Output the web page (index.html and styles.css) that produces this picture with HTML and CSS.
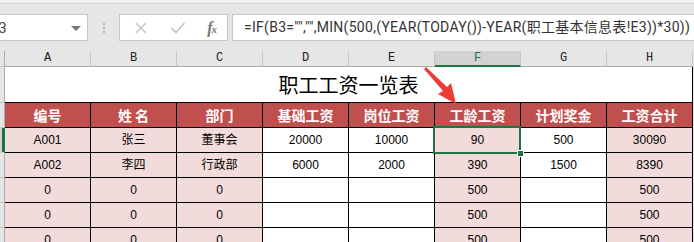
FILE: index.html
```html
<!DOCTYPE html>
<html lang="zh-CN">
<head>
  <meta charset="UTF-8">
  <title>职工工资一览表</title>
  <link rel="stylesheet" href="styles.css">
</head>
<body>

  <div class="top"></div>

  <div class="fbar">
    <div class="namebox"><span>F3</span><i class="caret"></i></div>
    <div class="grip"><b></b><b></b><b></b></div>
    <div class="btns">
      <svg width="14" height="14" viewBox="0 0 14 14"><path d="M2 2 L12 12 M12 2 L2 12" stroke="#c8c8c8" stroke-width="1.6" fill="none"/></svg>
      <svg width="16" height="14" viewBox="0 0 16 14"><path d="M1.5 7 L6 11.5 L14.5 2" stroke="#c8c8c8" stroke-width="1.8" fill="none"/></svg>
      <span class="fx">f<sub>x</sub></span>
    </div>
    <div class="formula">=IF(B3="","",MIN(500,(YEAR(TODAY())-YEAR(职工基本信息表!E3))*30))</div>
  </div>

  <div class="sheet">
    <div class="rh colh"></div>
    <div class="colh">A</div>
    <div class="colh">B</div>
    <div class="colh">C</div>
    <div class="colh">D</div>
    <div class="colh">E</div>
    <div class="colh on">F</div>
    <div class="colh">G</div>
    <div class="colh">H</div>

    <div class="rh title-rh"></div>
    <div class="title">职工工资一览表</div>

    <div class="rh"></div>
    <div class="hd">编号</div>
    <div class="hd">姓 名</div>
    <div class="hd">部门</div>
    <div class="hd">基础工资</div>
    <div class="hd">岗位工资</div>
    <div class="hd">工龄工资</div>
    <div class="hd">计划奖金</div>
    <div class="hd">工资合计</div>

    <div class="rh on"></div>
    <div class="c pk">A001</div>
    <div class="c pk">张三</div>
    <div class="c pk">董事会</div>
    <div class="c">20000</div>
    <div class="c">10000</div>
    <div class="c pk sel">90</div>
    <div class="c">500</div>
    <div class="c pk">30090</div>

    <div class="rh"></div>
    <div class="c pk">A002</div>
    <div class="c pk">李四</div>
    <div class="c pk">行政部</div>
    <div class="c">6000</div>
    <div class="c">2000</div>
    <div class="c pk">390</div>
    <div class="c">1500</div>
    <div class="c pk">8390</div>

    <div class="rh"></div>
    <div class="c pk">0</div>
    <div class="c pk">0</div>
    <div class="c pk">0</div>
    <div class="c"></div>
    <div class="c"></div>
    <div class="c pk">500</div>
    <div class="c"></div>
    <div class="c pk">500</div>

    <div class="rh"></div>
    <div class="c pk">0</div>
    <div class="c pk">0</div>
    <div class="c pk">0</div>
    <div class="c"></div>
    <div class="c"></div>
    <div class="c pk">500</div>
    <div class="c"></div>
    <div class="c pk">500</div>

    <div class="rh"></div>
    <div class="c pk">0</div>
    <div class="c pk">0</div>
    <div class="c pk">0</div>
    <div class="c"></div>
    <div class="c"></div>
    <div class="c pk">500</div>
    <div class="c"></div>
    <div class="c pk">500</div>

    <svg class="arrow" width="50" height="50" viewBox="0 0 50 50">
      <polygon points="9,7 11,5 32,25 36,21 41,42 23,32 28,29" fill="#ee3b36"/>
    </svg>
  </div>

</body>
</html>
```

FILE: styles.css
```css
body { margin: 0; background: #e6e6e6; font-family: "Liberation Sans", "Noto Sans CJK SC", sans-serif; overflow: hidden; }

.top { height: 3px; background: #f1f1f1; border-bottom: 1px solid #d4d4d4; }

.fbar { display: flex; height: 27px; margin: 10px 0; }
.namebox { margin-left: -20px; width: 108px; box-sizing: border-box; background: #fff; border: 1px solid #c6c6c6; display: flex; align-items: center; justify-content: space-between; padding: 0 6px 0 9px; font-family: Roboto, sans-serif; font-size: 15px; color: #444; }
.caret { width: 0; height: 0; border-left: 5px solid transparent; border-right: 5px solid transparent; border-top: 5px solid #777; margin-top: 1px; }
.grip { width: 31px; display: flex; flex-direction: column; align-items: center; justify-content: center; gap: 2px; }
.grip b { width: 2px; height: 2px; background: #b3b3b3; }
.btns { width: 109px; box-sizing: border-box; background: #fff; border: 1px solid #c6c6c6; display: flex; align-items: center; justify-content: space-between; padding: 0 10px 0 14px; }
.fx { font-family: "Liberation Serif", serif; font-style: italic; font-size: 16px; color: #777; font-weight: bold; }
.fx sub { font-size: 11px; vertical-align: 0; margin-left: -1px; }
.formula { flex: 1; margin-left: 4px; margin-right: -20px; background: #fff; border: 1px solid #c6c6c6; padding-left: 11px; font-family: Roboto, "Noto Sans CJK SC", sans-serif; font-size: 14px; letter-spacing: 0.28px; line-height: 25px; color: #333; white-space: nowrap; overflow: hidden; }

.sheet { position: relative; display: grid; grid-template-columns: 5px repeat(8, 86px); grid-template-rows: 16px 36px; grid-auto-rows: 25px; }

.colh { height: 16px; box-sizing: border-box; border-bottom: 1px solid #ababab; border-right: 1px solid #c6c6c6; font-family: "Liberation Mono", monospace; font-size: 12px; line-height: 15px; text-align: center; color: #222; }
.colh.on { background: #d2d2d2; color: #217346; border-bottom: 2px solid #217346; }

.rh { background: #e6e6e6; border-right: 1px solid #ababab; border-bottom: 1px solid #c6c6c6; box-sizing: border-box; }
.rh.on { background: #d2d2d2; border-right-color: #217346; box-shadow: inset -2px 0 #217346; }
.rh.colh { border-right: 1px solid #ababab; }

.title { grid-column: 2 / -1; background: #fff; border-right: 1px solid #000; border-bottom: 1px solid #000; font-family: "Noto Sans CJK SC", sans-serif; font-size: 20px; line-height: 35px; text-align: center; color: #000; }

.hd, .c { box-sizing: border-box; border-right: 1px solid #000; border-bottom: 1px solid #000; text-align: center; }
.hd { background: #c0504d; color: #fff; font-family: "Noto Sans CJK SC", sans-serif; font-weight: bold; font-size: 14px; line-height: 24px; }
.c { background: #fff; font-size: 12px; line-height: 24px; color: #000; }
.c.pk { background: #f2dcdb; }

.sel { position: relative; }
.sel::before { content: ""; position: absolute; left: -2px; top: -2px; right: -1px; bottom: -2px; border: 2px solid #217346; }
.sel::after { content: ""; position: absolute; right: -4px; bottom: -5px; width: 5px; height: 5px; background: #217346; border: 1px solid #fff; }

.arrow { position: absolute; left: 415px; top: 11px; }
```
